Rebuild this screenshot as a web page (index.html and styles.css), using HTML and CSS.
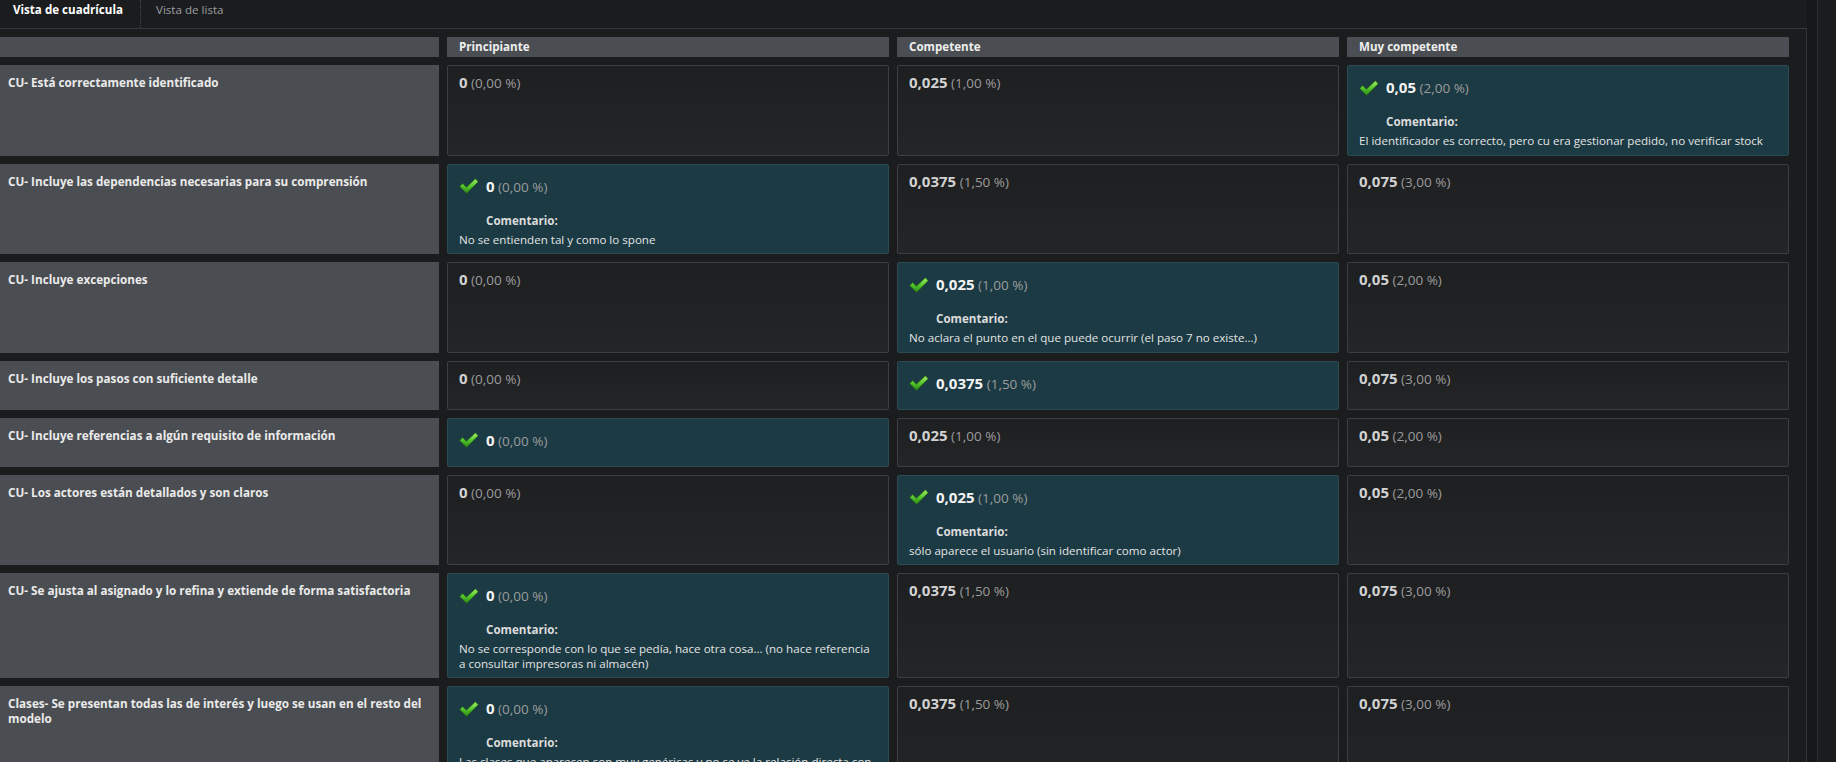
FILE: index.html
```html
<!DOCTYPE html>
<html lang="es">
<head>
<meta charset="utf-8">
<title>Rúbrica</title>
<link rel="stylesheet" href="styles.css">
</head>
<body>
<svg width="0" height="0" class="defs" aria-hidden="true">
  <defs>
    <linearGradient id="chk" x1="0" y1="0" x2="0" y2="1">
      <stop offset="0" stop-color="#a6ee6a"/>
      <stop offset="0.55" stop-color="#4fc12a"/>
      <stop offset="1" stop-color="#2f8a16"/>
    </linearGradient>
    <symbol id="check" viewBox="0 0 20 16">
      <path d="M0.8 8.6 L3.6 5.6 L7.4 9.2 L16.4 0.8 L19.2 3.8 L7.6 15.2 Z" fill="url(#chk)" stroke="#2a6e12" stroke-width="0.8" stroke-linejoin="round"/>
    </symbol>
  </defs>
</svg>
<div class="page">
  <div class="main">
    <div class="tabs">
      <div class="tab active">Vista de cuadrícula</div>
      <div class="tab">Vista de lista</div>
    </div>
    <div class="panel">
      <div class="grid">
        <div class="hdr hdr-blank"></div>
        <div class="hdr">Principiante</div>
        <div class="hdr">Competente</div>
        <div class="hdr">Muy competente</div>

        <div class="crit">CU- Está correctamente identificado</div>
        <div class="cell"><span class="val">0</span> <span class="pct">(0,00 %)</span></div>
        <div class="cell"><span class="val">0,025</span> <span class="pct">(1,00 %)</span></div>
        <div class="cell sel">
          <div class="line"><svg class="ck"><use href="#check"/></svg><span class="score"><span class="val">0,05</span> <span class="pct">(2,00 %)</span></span></div>
          <div class="comment">
            <div class="clabel">Comentario:</div>
            <div class="ctext">El identificador es correcto, pero cu era gestionar pedido, no verificar stock</div>
          </div>
        </div>

        <div class="crit">CU- Incluye las dependencias necesarias para su comprensión</div>
        <div class="cell sel">
          <div class="line"><svg class="ck"><use href="#check"/></svg><span class="score"><span class="val">0</span> <span class="pct">(0,00 %)</span></span></div>
          <div class="comment">
            <div class="clabel">Comentario:</div>
            <div class="ctext">No se entienden tal y como lo spone</div>
          </div>
        </div>
        <div class="cell"><span class="val">0,0375</span> <span class="pct">(1,50 %)</span></div>
        <div class="cell"><span class="val">0,075</span> <span class="pct">(3,00 %)</span></div>

        <div class="crit">CU- Incluye excepciones</div>
        <div class="cell"><span class="val">0</span> <span class="pct">(0,00 %)</span></div>
        <div class="cell sel">
          <div class="line"><svg class="ck"><use href="#check"/></svg><span class="score"><span class="val">0,025</span> <span class="pct">(1,00 %)</span></span></div>
          <div class="comment">
            <div class="clabel">Comentario:</div>
            <div class="ctext">No aclara el punto en el que puede ocurrir (el paso 7 no existe...)</div>
          </div>
        </div>
        <div class="cell"><span class="val">0,05</span> <span class="pct">(2,00 %)</span></div>

        <div class="crit">CU- Incluye los pasos con suficiente detalle</div>
        <div class="cell"><span class="val">0</span> <span class="pct">(0,00 %)</span></div>
        <div class="cell sel">
          <div class="line"><svg class="ck"><use href="#check"/></svg><span class="score"><span class="val">0,0375</span> <span class="pct">(1,50 %)</span></span></div>
        </div>
        <div class="cell"><span class="val">0,075</span> <span class="pct">(3,00 %)</span></div>

        <div class="crit">CU- Incluye referencias a algún requisito de información</div>
        <div class="cell sel">
          <div class="line"><svg class="ck"><use href="#check"/></svg><span class="score"><span class="val">0</span> <span class="pct">(0,00 %)</span></span></div>
        </div>
        <div class="cell"><span class="val">0,025</span> <span class="pct">(1,00 %)</span></div>
        <div class="cell"><span class="val">0,05</span> <span class="pct">(2,00 %)</span></div>

        <div class="crit">CU- Los actores están detallados y son claros</div>
        <div class="cell"><span class="val">0</span> <span class="pct">(0,00 %)</span></div>
        <div class="cell sel">
          <div class="line"><svg class="ck"><use href="#check"/></svg><span class="score"><span class="val">0,025</span> <span class="pct">(1,00 %)</span></span></div>
          <div class="comment">
            <div class="clabel">Comentario:</div>
            <div class="ctext">sólo aparece el usuario (sin identificar como actor)</div>
          </div>
        </div>
        <div class="cell"><span class="val">0,05</span> <span class="pct">(2,00 %)</span></div>

        <div class="crit">CU- Se ajusta al asignado y lo refina y extiende de forma satisfactoria</div>
        <div class="cell sel">
          <div class="line"><svg class="ck"><use href="#check"/></svg><span class="score"><span class="val">0</span> <span class="pct">(0,00 %)</span></span></div>
          <div class="comment">
            <div class="clabel">Comentario:</div>
            <div class="ctext">No se corresponde con lo que se pedía, hace otra cosa... (no hace referencia a consultar impresoras ni almacén)</div>
          </div>
        </div>
        <div class="cell"><span class="val">0,0375</span> <span class="pct">(1,50 %)</span></div>
        <div class="cell"><span class="val">0,075</span> <span class="pct">(3,00 %)</span></div>

        <div class="crit">Clases- Se presentan todas las de interés y luego se usan en el resto del modelo</div>
        <div class="cell sel">
          <div class="line"><svg class="ck"><use href="#check"/></svg><span class="score"><span class="val">0</span> <span class="pct">(0,00 %)</span></span></div>
          <div class="comment">
            <div class="clabel">Comentario:</div>
            <div class="ctext">Las clases que aparecen son muy genéricas y no se ve la relación directa con el resto del modelo</div>
          </div>
        </div>
        <div class="cell"><span class="val">0,0375</span> <span class="pct">(1,50 %)</span></div>
        <div class="cell"><span class="val">0,075</span> <span class="pct">(3,00 %)</span></div>
      </div>
    </div>
  </div>
  <div class="rail"></div>
</div>
</body>
</html>
```

FILE: styles.css
```css
html, body {
  margin: 0;
  padding: 0;
  background: #1b1c1e;
  font-family: "Open Sans", "Liberation Sans", sans-serif;
  color: #e2e2e2;
}
.defs {
  position: absolute;
  width: 0;
  height: 0;
}
.page {
  display: flex;
  align-items: stretch;
  min-height: 762px;
}
.main {
  width: 1807px;
  flex: none;
}
.tabs {
  display: flex;
  height: 28px;
  align-items: stretch;
}
.tab {
  font-size: 11.6px;
  line-height: 20px;
  padding: 0 0 0 13px;
  color: #9d9fa2;
}
.tab.active {
  color: #ffffff;
  font-weight: 700;
  width: 127px;
  padding-left: 13px;
  border-right: 1px dotted #45474a;
}
.tab + .tab {
  padding-left: 15px;
}
.panel {
  border-top: 1px solid #34363a;
  border-right: 1px solid #34363a;
  padding: 8px 17px 0 0;
}
.grid {
  display: grid;
  grid-template-columns: 439px 442px 442px 442px;
  column-gap: 8px;
  row-gap: 8px;
}
.hdr {
  background: #4a4e52;
  height: 20px;
  line-height: 20px;
  font-size: 11.6px;
  font-weight: 700;
  color: #eeeeee;
  padding-left: 12px;
}
.hdr-blank {
  padding: 0;
}
.crit {
  background: #4a4e52;
  font-size: 11.7px;
  font-weight: 700;
  line-height: 15px;
  color: #eaeaea;
  padding: 10px 8px 8px 8px;
}
.cell {
  border: 1px solid #3c3e41;
  border-radius: 2px;
  background: linear-gradient(#1e1f21, #232527);
  padding: 6px 11px 8px 11px;
  font-size: 13.5px;
  line-height: 20px;
}
.cell.sel {
  background: #1b3a43;
  border-color: #2c4a52;
  padding: 9px 11px 6px 11px;
}
.val {
  font-weight: 700;
  font-size: 15px;
  color: #d2d2d2;
}
.pct {
  color: #9c9c9c;
  font-size: 13.5px;
}
.sel .val {
  color: #f4f4f4;
}
.line {
  display: flex;
  align-items: center;
  height: 25px;
  margin-bottom: 7px;
}
.ck {
  width: 20px;
  height: 16px;
  margin-right: 7px;
  flex: none;
}
.comment {
  padding-top: 7px;
}
.clabel {
  margin-left: 27px;
  font-size: 11.6px;
  font-weight: 700;
  line-height: 16px;
  color: #dcdcdc;
}
.ctext {
  margin-top: 4px;
  font-size: 11.6px;
  line-height: 14.5px;
  color: #e4e4e4;
}
.rail {
  width: 10px;
  flex: none;
  background: #161719;
  border-right: 1px solid #2c2e31;
}
```
